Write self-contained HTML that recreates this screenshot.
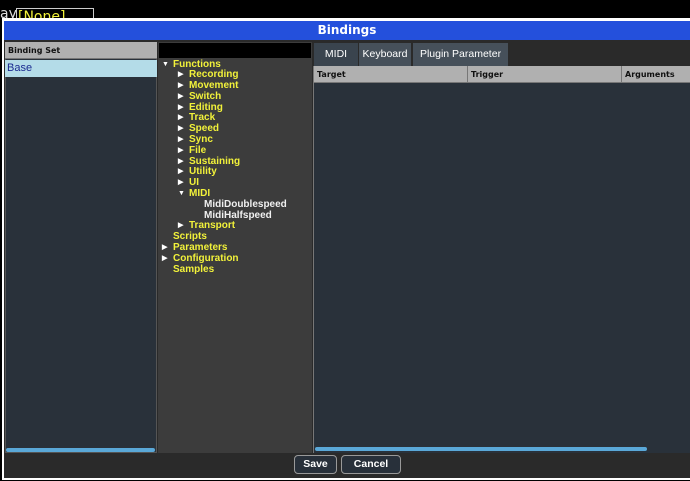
<!DOCTYPE html><html><head><style>
*{margin:0;padding:0;box-sizing:border-box}
body{width:690px;height:481px;background:#000;position:relative;overflow:hidden;font-family:"DejaVu Sans","Liberation Sans",sans-serif}
.a{position:absolute}
.tree div{height:10.8px;line-height:10.8px;font-size:10px;font-family:"Liberation Sans",sans-serif;font-weight:bold;color:#f2f23a;white-space:nowrap;position:relative}
.tree .w{color:#f0f0f0}
.tri{position:absolute;font-size:7px;color:#fff}
.hd{font-size:8px;font-weight:bold;color:#111;background:#b0b0b0;border-bottom:1px solid #777}
.btn{position:absolute;top:455px;height:19px;border:1px solid #999;border-radius:4px;background:#28303a;color:#fff;font-size:10.5px;text-align:center;line-height:17px;font-family:"Liberation Sans",sans-serif;font-weight:bold}
</style></head><body>
<div class="a" style="left:0;top:6px;color:#ddd;font-size:14px">ay</div>
<div class="a" style="left:16px;top:8px;width:78px;height:12px;border:1px solid #ccc;border-bottom:none;color:#f2f23a;font-size:14px;line-height:16px;padding-left:1px;overflow:hidden">[None]</div>
<div class="a" style="left:2px;top:18px;width:688px;height:462px;background:#fff"></div>
<div class="a" style="left:4px;top:21px;width:686px;height:457px;background:#2a2a2a"></div>
<div class="a" style="left:4px;top:21px;width:686px;height:19px;background:#2450dc;color:#fff;font-size:12px;font-weight:bold;text-align:center;line-height:19px">Bindings</div>
<div class="a" style="left:5px;top:42px;width:152px;height:411px;background:#29313a;border:1px solid #555"></div>
<div class="a hd" style="left:5px;top:42px;width:152px;height:17px;line-height:17px;padding-left:3px">Binding Set</div>
<div class="a" style="left:5px;top:60px;width:152px;height:17px;background:#b4dce8;color:#1a2a90;font-size:11px;line-height:17px;padding-left:2px;font-family:'Liberation Sans',sans-serif">Base</div>
<div class="a" style="left:6px;top:448px;width:149px;height:4px;border-radius:2px;background:#5aa8d8"></div>
<div class="a" style="left:158px;top:42px;width:154px;height:411px;background:#3c3c3c"></div>
<div class="a" style="left:159px;top:43px;width:152px;height:15px;background:#000"></div>
<div class="a tree" style="left:158px;top:59.5px;width:154px">
<div style="padding-left:15px"><span class="tri" style="left:4px">▼</span>Functions</div>
<div style="padding-left:31px"><span class="tri" style="left:20px">▶</span>Recording</div>
<div style="padding-left:31px"><span class="tri" style="left:20px">▶</span>Movement</div>
<div style="padding-left:31px"><span class="tri" style="left:20px">▶</span>Switch</div>
<div style="padding-left:31px"><span class="tri" style="left:20px">▶</span>Editing</div>
<div style="padding-left:31px"><span class="tri" style="left:20px">▶</span>Track</div>
<div style="padding-left:31px"><span class="tri" style="left:20px">▶</span>Speed</div>
<div style="padding-left:31px"><span class="tri" style="left:20px">▶</span>Sync</div>
<div style="padding-left:31px"><span class="tri" style="left:20px">▶</span>File</div>
<div style="padding-left:31px"><span class="tri" style="left:20px">▶</span>Sustaining</div>
<div style="padding-left:31px"><span class="tri" style="left:20px">▶</span>Utility</div>
<div style="padding-left:31px"><span class="tri" style="left:20px">▶</span>UI</div>
<div style="padding-left:31px"><span class="tri" style="left:20px">▼</span>MIDI</div>
<div class="w" style="padding-left:46px">MidiDoublespeed</div>
<div class="w" style="padding-left:46px">MidiHalfspeed</div>
<div style="padding-left:31px"><span class="tri" style="left:20px">▶</span>Transport</div>
<div style="padding-left:15px">Scripts</div>
<div style="padding-left:15px"><span class="tri" style="left:4px">▶</span>Parameters</div>
<div style="padding-left:15px"><span class="tri" style="left:4px">▶</span>Configuration</div>
<div style="padding-left:15px">Samples</div>
</div>
<div class="a" style="left:313px;top:42px;width:377px;height:24px;background:#2a2a2a"></div>
<div class="a" style="left:314px;top:43px;width:44px;height:23px;background:#3a444e;color:#fff;font-size:10.5px;text-align:center;line-height:22px;font-family:'Liberation Sans',sans-serif">MIDI</div>
<div class="a" style="left:359px;top:43px;width:52px;height:23px;background:#46505a;color:#fff;font-size:10.5px;text-align:center;line-height:22px;font-family:'Liberation Sans',sans-serif">Keyboard</div>
<div class="a" style="left:413px;top:43px;width:95px;height:23px;background:#46505a;color:#fff;font-size:10.5px;text-align:center;line-height:22px;font-family:'Liberation Sans',sans-serif">Plugin Parameter</div>
<div class="a" style="left:313px;top:66px;width:377px;height:387px;background:#29313a;border-left:1px solid #777"></div>
<div class="a hd" style="left:314px;top:66px;width:154px;height:17px;line-height:17px;padding-left:3px;border-right:1px solid #777">Target</div>
<div class="a hd" style="left:468px;top:66px;width:154px;height:17px;line-height:17px;padding-left:3px;border-right:1px solid #777">Trigger</div>
<div class="a hd" style="left:622px;top:66px;width:68px;height:17px;line-height:17px;padding-left:3px">Arguments</div>
<div class="a" style="left:315px;top:447px;width:332px;height:4px;border-radius:2px;background:#5aa8d8"></div>
<div class="btn" style="left:294px;width:43px">Save</div>
<div class="btn" style="left:341px;width:60px">Cancel</div>
</body></html>
